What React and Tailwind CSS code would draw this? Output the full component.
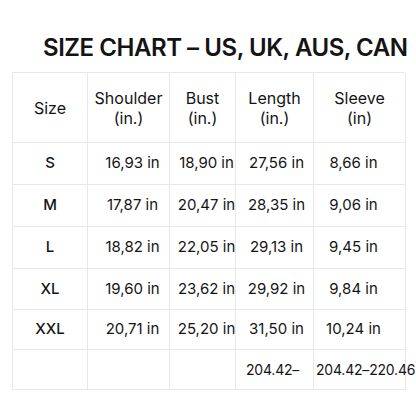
const cols = ['w-[75px]', 'w-[82px]', 'w-[66px]', 'w-[78px]', 'w-[92px]']

const rows = [
    { h: 'h-[42px]', cells: ['S', '16,93 in', '18,90 in', '27,56 in', '8,66 in'] },
    { h: 'h-[42px]', cells: ['M', '17,87 in', '20,47 in', '28,35 in', '9,06 in'] },
    { h: 'h-[42px]', cells: ['L', '18,82 in', '22,05 in', '29,13 in', '9,45 in'] },
    { h: 'h-[41px]', cells: ['XL', '19,60 in', '23,62 in', '29,92 in', '9,84 in'] },
    { h: 'h-[40px]', cells: ['XXL', '20,71 in', '25,20 in', '31,50 in', '10,24 in'] },
]

// small nudges so the numbers sit where they do in the chart
const shift = ['', 'pl-2', 'pl-2', 'pl-1', 'pr-3']

function Cell({ col, children, className = '' }) {
    return (
        <div className={`${cols[col]} shrink-0 border-r border-b border-[#e8e8e8] flex items-center justify-center whitespace-nowrap ${className}`}>
            <span className={shift[col]}>{children}</span>
        </div>
    )
}

function App() {
    return (
        <div
            className="w-[416px] h-[416px] bg-white text-[#141414] pt-[36px]"
            style={{ fontFamily: 'Inter, "Noto Sans", sans-serif' }}
        >
            <h1 className="pl-[43px] text-[24px] leading-[24px] font-semibold tracking-[-0.45px] whitespace-nowrap">
                SIZE CHART – US, UK, AUS, CAN
            </h1>

            <div className="mt-3 ml-[12px] w-[393px] border-l border-t border-[#e8e8e8] text-[15px]">
                <div className="flex h-[70px] leading-[20px] text-center text-[16px]">
                    <Cell col={0}>Size</Cell>
                    <Cell col={1}><span className="block -ml-2">Shoulder<br />(in.)</span></Cell>
                    <Cell col={2}><span className="block -ml-2">Bust<br />(in.)</span></Cell>
                    <Cell col={3}><span className="block -ml-1">Length<br />(in.)</span></Cell>
                    <Cell col={4}><span className="block -mr-3">Sleeve<br />(in)</span></Cell>
                </div>
                {rows.map((r, i) => (
                    <div key={i} className={`flex ${r.h}`}>
                        {r.cells.map((c, j) => (
                            <Cell key={j} col={j} className={j === 0 ? 'font-medium' : ''}>{c}</Cell>
                        ))}
                    </div>
                ))}
                <div className="flex h-[40px] text-[14px] tracking-[-0.2px]">
                    <Cell col={0} />
                    <Cell col={1} />
                    <Cell col={2} />
                    <div className="w-[78px] shrink-0 border-r border-b border-[#e8e8e8] flex items-center whitespace-nowrap pl-[10px]">
                        204.42–
                    </div>
                    <div className="w-[92px] shrink-0 border-r border-b border-[#e8e8e8] flex items-center whitespace-nowrap pl-[2px]">
                        204.42–220.46
                    </div>
                </div>
            </div>
        </div>
    )
}

export default App
